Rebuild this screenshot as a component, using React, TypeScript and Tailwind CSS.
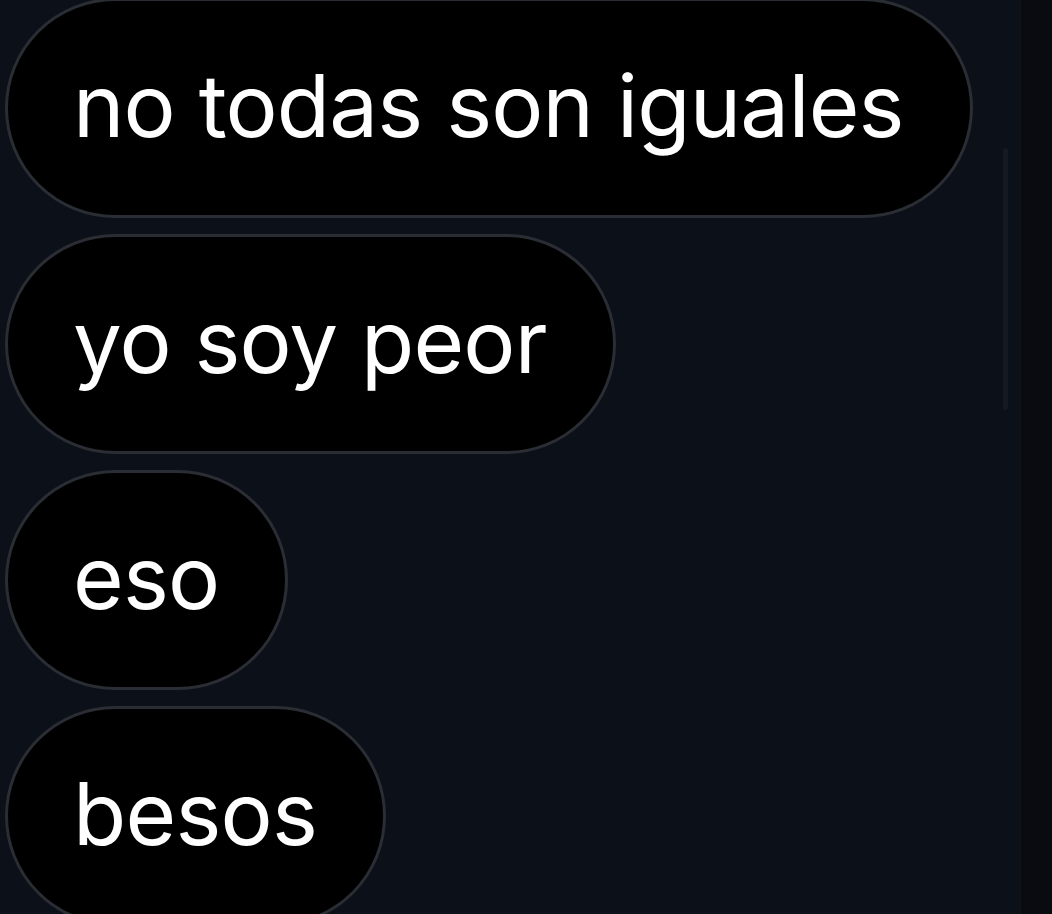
const messages = ['no todas son iguales', 'yo soy peor', 'eso', 'besos'];

function Bubble({ text }: { text: string }) {
  return (
    <div className="h-[220px] shrink-0 flex items-center rounded-full bg-black border-[3px] border-[#2a2d33] pl-[65px] pr-[66px]">
      <span className="text-white text-[87px] leading-none tracking-[-0.8px] whitespace-nowrap pb-[6px]">
        {text}
      </span>
    </div>
  );
}

export default function App() {
  return (
    <div
      className="w-[1052px] h-[914px] overflow-hidden flex bg-[#0c1018]"
      style={{ fontFamily: 'Inter, "Noto Sans", sans-serif' }}
    >
      <div className="relative w-[1020px] h-full">
        <div className="flex flex-col items-start gap-[16px] pl-[5px] -mt-[2px]">
          {messages.map((m) => (
            <Bubble key={m} text={m} />
          ))}
        </div>
        <div className="absolute left-[1003px] top-[148px] w-[5px] h-[262px] rounded-full bg-[#151922]" />
      </div>
      <div className="flex-1 h-full bg-[#090b10] border-l border-[#10131a]" />
    </div>
  );
}
